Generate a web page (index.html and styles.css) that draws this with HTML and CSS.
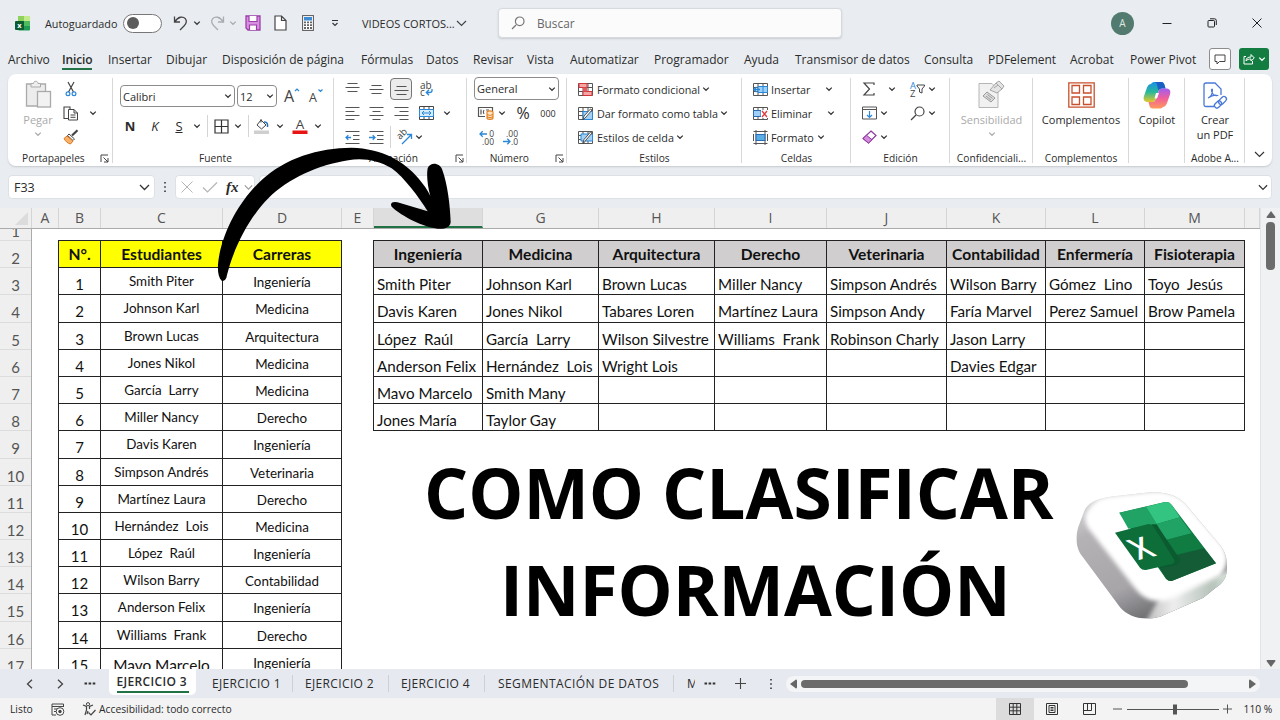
FILE: index.html
```html
<!DOCTYPE html>
<html lang="es">
<head>
  <meta charset="UTF-8">
  <meta name="viewport" content="width=device-width, initial-scale=1">
  <title>VIDEOS CORTOS</title>
  <link rel="stylesheet" href="styles.css">
</head>
<body>

<svg class="defs">
  <symbol id="chev" viewBox="0 0 8 8"><path d="M1.2 2.6 L4 5.3 L6.8 2.6" fill="none" stroke="currentColor" stroke-width="1.2"/></symbol>
  <symbol id="launch" viewBox="0 0 9 9"><path d="M1 8 V1 H8 M3.5 3.5 L8 8 M8 4 V8 H4" fill="none" stroke="#444" stroke-width="1"/></symbol>
  <symbol id="grid" viewBox="0 0 15 15"><path d="M.5 1.5 H14.5 V13.5 H.5 Z M5 1 V14 M10 1 V14 M0 5.5 H15 M0 9.5 H15" fill="#fff" stroke="#555"/></symbol>
</svg>

<div class="app">
  <div class="titlebar">
    <svg class="xl" width="15" height="15" viewBox="0 0 15 15"><rect x="3" width="6" height="8" fill="#8ed15c"/><rect x="9" width="6" height="8" fill="#c3ea8b"/><rect x="3" y="5" width="12" height="9.5" rx="1" fill="#1f9d55"/><rect x="9" y="5" width="6" height="5" fill="#4dbb5f"/><rect y="5" width="9" height="9" rx="1" fill="#0b5c31"/><text x="4.5" y="12" text-anchor="middle" font-size="7.5" font-weight="700" fill="#fff">x</text></svg>
    <span class="autosave">Autoguardado</span>
    <span class="toggle"></span>
    <svg class="undo" width="15" height="16" viewBox="0 0 15 16"><path d="M1.5 1.5 V7 H7 M1.8 6.8 C5 1.5 10 1 12.3 3.7 C14.5 6.5 13 9 11 11 L7 15" fill="none" stroke="#444" stroke-width="1.3"/></svg>
    <svg class="chev c1"><use href="#chev"/></svg>
    <svg class="redo" width="15" height="16" viewBox="0 0 15 16"><path d="M13.5 1.5 V7 H8 M13.2 6.8 C10 1.5 5 1 2.7 3.7 C.5 6.5 2 9 4 11 L8 15" fill="none" stroke="#a9adb0" stroke-width="1.3"/></svg>
    <svg class="chev c2"><use href="#chev"/></svg>
    <svg class="save" width="16" height="16" viewBox="0 0 16 16"><path d="M1 1 H15 V15 H3 L1 13 Z" fill="#d88fe0" stroke="#9b3fa8" stroke-width="1.3"/><path d="M4 1 V6.5 H12 V1 M4.5 15 V10 H11.5 V15" fill="#fff" stroke="#9b3fa8" stroke-width="1.2"/></svg>
    <svg class="doc" width="13" height="16" viewBox="0 0 13 16"><path d="M1 1 H7.5 L12 5.5 V15 H1 Z M7.5 1 V5.5 H12" fill="#fff" stroke="#444" stroke-width="1.2"/></svg>
    <svg class="calc" width="12" height="16" viewBox="0 0 12 16"><rect x=".6" y=".6" width="10.8" height="14.8" fill="#fff" stroke="#555"/><rect x="2" y="2" width="8" height="3.5" fill="#3d8bd4"/><path d="M3 6.5 V14 M6 6.5 V14 M9 6.5 V14" stroke="#555" stroke-width="1.8" stroke-dasharray="1.8 1"/></svg>
    <svg class="more" width="8" height="8" viewBox="0 0 8 8"><path d="M1 1.5 H7 M1.5 4 L4 6.5 L6.5 4" fill="none" stroke="#333" stroke-width="1.1"/></svg>
    <span class="book">VIDEOS CORTOS...</span>
    <svg class="bookchev" width="11" height="7" viewBox="0 0 11 7"><path d="M1 1 L5.5 5.5 L10 1" fill="none" stroke="#444" stroke-width="1.2"/></svg>
    <div class="search">
      <svg width="14" height="14" viewBox="0 0 14 14"><path d="M5 9 L1 13" stroke="#777" stroke-width="1.2"/><circle cx="8.7" cy="5.3" r="4.3" fill="none" stroke="#777" stroke-width="1.2"/></svg>
      <span>Buscar</span>
    </div>
    <span class="avatar">A</span>
    <svg class="wmin" width="10" height="10" viewBox="0 0 10 10"><path d="M.5 5.5 H9.5" stroke="#222"/></svg>
    <svg class="wmax" width="10" height="10" viewBox="0 0 10 10"><path d="M1 3.2 Q1 2.5 1.8 2.5 H6.7 Q7.5 2.5 7.5 3.3 V8.2 Q7.5 9 6.7 9 H1.8 Q1 9 1 8.2 Z M3 .8 H7.5 Q9.3 .8 9.3 2.5 V7" fill="none" stroke="#222"/></svg>
    <svg class="wclose" width="10" height="10" viewBox="0 0 10 10"><path d="M.5 .5 L9.5 9.5 M9.5 .5 L.5 9.5" stroke="#222"/></svg>
  </div>

  <div class="menu">
    <span>Archivo</span><span class="active">Inicio</span><span>Insertar</span><span>Dibujar</span><span>Disposición de página</span><span>Fórmulas</span><span>Datos</span><span>Revisar</span><span>Vista</span><span>Automatizar</span><span>Programador</span><span>Ayuda</span><span>Transmisor de datos</span><span>Consulta</span><span>PDFelement</span><span>Acrobat</span><span>Power Pivot</span>
    <div class="comment"><svg width="12" height="11" viewBox="0 0 12 11"><path d="M1 1 H11 V7.5 H5.5 L3 10 V7.5 H1 Z" fill="none" stroke="#444"/></svg></div>
    <div class="share"><svg width="12" height="12" viewBox="0 0 12 12"><path d="M3 3.5 H1 V11 H9.5 V8 M3 8 C3 5 5 4 8 4 V1.5 L11.3 5 L8 8 V6 C6 6 4 6.5 3 8" fill="none" stroke="#fff"/></svg><svg class="chev"><use href="#chev"/></svg></div>
  </div>

  <div class="ribbon">
    <div class="group clip">
      <div class="body">
        <div class="big paste">
          <svg width="27" height="29" viewBox="0 0 27 29"><path d="M2 4 H20 V11 H12 V26 H2 Z" fill="#ececec"/><path d="M7 4 H1.5 V26 H12 M15 4 H20.5 V11" fill="none" stroke="#aaa" stroke-width="1.3"/><path d="M6 3.5 H8.5 C8.5 .5 13 .5 13 3.5 H15.5 V7 H6 Z" fill="#eee" stroke="#aaa"/><rect x="12.5" y="11.5" width="13" height="15.5" fill="#f2f2f2" stroke="#aaa" stroke-width="1.3"/></svg>
          <span>Pegar</span>
          <svg class="chev"><use href="#chev"/></svg>
        </div>
        <svg width="12" height="16" viewBox="0 0 12 16"><path d="M3 1 L8.5 11 M9 1 L3.5 11" stroke="#444" stroke-width="1.2"/><circle cx="3" cy="12.7" r="1.9" fill="none" stroke="#2b88d8" stroke-width="1.2"/><circle cx="9" cy="12.7" r="1.9" fill="none" stroke="#2b88d8" stroke-width="1.2"/></svg><i></i>
        <svg width="16" height="16" viewBox="0 0 16 16"><path d="M5 13.5 H1 V2 H7 V4" fill="none" stroke="#444" stroke-width="1.1"/><path d="M5.5 4.5 H11 L14.5 8 V15 H5.5 Z M11 4.5 V8 H14.5 M7.5 10 H12.5 M7.5 12.3 H12.5" fill="#fff" stroke="#444"/></svg>
        <svg class="chev"><use href="#chev"/></svg>
        <svg width="16" height="16" viewBox="0 0 16 16"><path d="M14.5 1.2 L9 6.5" stroke="#444" stroke-width="2.2"/><path d="M6 5 L11.5 10 L10 11.5 L4.5 6.5 Z" fill="#fff" stroke="#444"/><path d="M4 7 L10 12 L7.5 15 C5 14.5 2.5 12.5 1 9.5 Z" fill="#f9b26b" stroke="#d9751c"/></svg><i></i>
      </div>
      <div class="label">Portapapeles<svg class="launch"><use href="#launch"/></svg></div>
    </div>

    <div class="group font">
      <div class="fields">
        <div class="field name">Calibri<svg class="chev"><use href="#chev"/></svg></div>
        <div class="field size">12<svg class="chev"><use href="#chev"/></svg></div>
        <svg class="grow" width="16" height="18" viewBox="0 0 16 18"><text x="0" y="14.5" font-size="16" fill="#444">A</text><path d="M11 4 L13 2 L15 4" fill="none" stroke="#2b88d8" stroke-width="1.2"/></svg>
        <svg class="shrink" width="16" height="18" viewBox="0 0 16 18"><text x="0" y="14.5" font-size="12.5" fill="#444">A</text><path d="M9.5 2.5 L11.5 4.5 L13.5 2.5" fill="none" stroke="#2b88d8" stroke-width="1.2"/></svg>
      </div>
      <div class="marks">
        <b>N</b><em>K</em><u>S</u><svg class="chev"><use href="#chev"/></svg><hr>
        <svg width="15" height="15" viewBox="0 0 15 15"><path d="M1 1 H14 V14 H1 Z M7.5 1 V14 M1 7.5 H14" fill="none" stroke="#333" stroke-width="1.2"/></svg>
        <svg class="chev"><use href="#chev"/></svg><hr>
        <svg width="16" height="16" viewBox="0 0 16 16"><path d="M7 2 L12 7 L7.5 11 L3 7 Z M7 4.5 V1" fill="none" stroke="#444"/><path d="M10 4 C13 3.5 14 6 13.5 9" fill="none" stroke="#2b6cb0" stroke-width="1.5"/><rect y="12.5" width="15" height="3.5" fill="#cfcfcf"/></svg>
        <svg class="chev"><use href="#chev"/></svg>
        <svg width="16" height="16" viewBox="0 0 16 16"><text x="8" y="10.5" text-anchor="middle" font-size="13.5" fill="#444">A</text><rect x=".5" y="12.5" width="15" height="3.5" fill="#e81313"/></svg>
        <svg class="chev"><use href="#chev"/></svg>
      </div>
      <div class="label">Fuente</div>
    </div>

    <div class="group align">
      <div class="body">
        <svg class="ln"><path d="M2.5 1.5 H12.5 M.5 5.5 H14.5 M2.5 9.5 H12.5"/></svg>
        <svg class="ln"><path d="M2.5 3.5 H12.5 M.5 7.5 H14.5 M2.5 11.5 H12.5"/></svg>
        <span class="pressed"><svg class="ln"><path d="M2.5 5.5 H12.5 M.5 9.5 H14.5 M2.5 13.5 H12.5"/></svg></span>
        <svg width="14" height="16" viewBox="0 0 14 16"><text x="1" y="7.5" font-size="10" fill="#444">ab</text><text x="1" y="14.5" font-size="10" fill="#444">c</text><path d="M13 8 V9.500 Q13 11.500 10.500 11.500 H7.500 M10 8.800 L7.300 11.500 L10 14.200" fill="none" stroke="#2b88d8" stroke-width="1.3"/></svg><i></i>
        <svg class="ln"><path d="M.5 1.5 H14.5 M.5 5.5 H9.5 M.5 9.5 H14.5 M.5 13.5 H9.5"/></svg>
        <svg class="ln"><path d="M.5 1.5 H14.5 M3.5 5.5 H11.5 M.5 9.5 H14.5 M3.5 13.5 H11.5"/></svg>
        <svg class="ln"><path d="M.5 1.5 H14.5 M5.5 5.5 H14.5 M.5 9.5 H14.5 M5.5 13.5 H14.5"/></svg>
        <svg width="15" height="14" viewBox="0 0 15 14"><path d="M.5 .5 H14.5 V13.5 H.5 Z M5 .5 V3.5 M10 .5 V3.5 M5 10.5 V13.5 M10 10.5 V13.5" fill="#fff" stroke="#444"/><rect x=".5" y="3.5" width="14" height="7" fill="#d6ebfb" stroke="#2b88d8"/><path d="M3 7 H12 M5 5 L3 7 L5 9 M10 5 L12 7 L10 9" fill="none" stroke="#2b88d8"/></svg>
        <svg class="chev"><use href="#chev"/></svg>
        <svg class="ln"><path d="M.5 1.5 H14.5 M8 5.5 H14.5 M8 9.5 H14.5 M.5 13.5 H14.5"/><path class="blue" d="M6 7.5 H1 M3.3 5.2 L1 7.5 L3.3 9.8"/></svg>
        <svg class="ln"><path d="M.5 1.5 H14.5 M8 5.5 H14.5 M8 9.5 H14.5 M.5 13.5 H14.5"/><path class="blue" d="M0 7.5 H6 M3.7 5.2 L6 7.5 L3.7 9.8"/></svg>
        <span class="orient"><hr><svg width="17" height="16" viewBox="0 0 17 16"><text transform="translate(4 11) rotate(-45)" font-size="9.5" fill="#444">ab</text><path d="M6 15 L15 6 M11 5.5 H15.5 V10" fill="none" stroke="#2b88d8" stroke-width="1.3"/></svg></span>
        <svg class="chev left"><use href="#chev"/></svg>
      </div>
      <div class="label">Alineación<svg class="launch"><use href="#launch"/></svg></div>
    </div>

    <div class="group number">
      <div class="field">General<svg class="chev"><use href="#chev"/></svg></div>
      <div class="nums">
        <svg width="16" height="14" viewBox="0 0 16 14"><path d="M14.5 5 V1.5 H.5 V10.5 H7 M3 3.5 V8.5 M6 4 Q4.5 6 6 8 M8 4 H11" fill="none" stroke="#555" stroke-width="1.2"/><path d="M9 6 C9 4.5 15 4.5 15 6 V12 C15 13.8 9 13.8 9 12 Z M9 8.500 Q12 10 15 8.500 M9 10.800 Q12 12.200 15 10.800" fill="#fde3c4" stroke="#e07b18" stroke-width="1.1"/></svg>
        <svg class="chev"><use href="#chev"/></svg>
        <span class="pct">%</span><span class="mil">000</span>
      </div>
      <div class="decs">
        <svg width="15" height="15" viewBox="0 0 15 15"><text x="15" y="7" text-anchor="end" font-size="8.5" fill="#444">0</text><text x="15" y="14.8" text-anchor="end" font-size="8.5" fill="#444">.00</text><path d="M8 4 H1 M3.7 1.3 L1 4 L3.7 6.7" fill="none" stroke="#2b88d8" stroke-width="1.3"/></svg>
        <svg width="15" height="15" viewBox="0 0 15 15"><text x="15" y="7" text-anchor="end" font-size="8.5" fill="#444">.00</text><text x="15" y="14.8" text-anchor="end" font-size="8.5" fill="#444">.0</text><path d="M0 11.5 H7 M4.3 8.8 L7 11.5 L4.3 14.2" fill="none" stroke="#2b88d8" stroke-width="1.3"/></svg>
      </div>
      <div class="label">Número<svg class="launch"><use href="#launch"/></svg></div>
    </div>

    <div class="group styles">
      <div class="body">
        <div class="item"><svg width="15" height="15" viewBox="0 0 15 15"><use href="#grid"/><path d="M1 1.5 H9 V5.5 H1 Z M5 9.5 H14 V13.5 H5 Z" fill="#f6a5a5" stroke="#d13438"/><path d="M5 5.5 H9 V9.5 H5 Z" fill="#e8575b"/></svg>Formato condicional<svg class="chev"><use href="#chev"/></svg></div>
        <div class="item"><svg width="15" height="15" viewBox="0 0 15 15"><use href="#grid"/><path d="M5 5.5 H14.5 V13.5 H5 Z" fill="#a3d0f5" stroke="#2b88d8"/><path d="M14 4 L8 11 L5 14 L6 10 L12.5 3 Z" fill="#fff" stroke="#444" stroke-width=".9"/></svg>Dar formato como tabla<svg class="chev"><use href="#chev"/></svg></div>
        <div class="item"><svg width="15" height="15" viewBox="0 0 15 15"><use href="#grid"/><path d="M3 4 H14.5 V11 H3 Z" fill="#a3d0f5" stroke="#2b88d8"/><path d="M14 3 L8 10 L5 14 L6 9.5 L12.5 2 Z" fill="#fff" stroke="#444" stroke-width=".9"/></svg>Estilos de celda<svg class="chev"><use href="#chev"/></svg></div>
      </div>
      <div class="label">Estilos</div>
    </div>

    <div class="group cells">
      <div class="body">
        <div class="item"><svg width="15" height="15" viewBox="0 0 15 15"><use href="#grid"/><path d="M5 4.5 H14.5 V10.5 H5 Z M10 4.5 V10.5" fill="#9fd0f7" stroke="#2b88d8"/><path d="M7 7.5 H1 M3.5 5 L1 7.5 L3.5 10" fill="none" stroke="#2b88d8" stroke-width="1.3"/></svg><span class="mid">Insertar</span><svg class="chev"><use href="#chev"/></svg></div>
        <div class="item"><svg width="15" height="15" viewBox="0 0 15 15"><use href="#grid"/><path d="M.5 4.5 H8 V10.5 H.5 Z" fill="#9fd0f7" stroke="#2b6cb0"/><rect x="8" y="4" width="7" height="8" fill="#fff"/><path d="M9 5 L14 11 M14 5 L9 11" stroke="#e03a3a" stroke-width="1.3"/></svg><span>Eliminar</span><svg class="chev"><use href="#chev"/></svg></div>
        <div class="item"><svg width="15" height="15" viewBox="0 0 15 15"><path d="M.5 1.5 H14.5 M.5 13.5 H14.5 M3 0 V15 M12 0 V15 M.5 4 V11 M14.5 4 V11" stroke="#555" fill="none"/><rect x="3" y="4.5" width="9" height="6" fill="#5aaee8" stroke="#2b6cb0"/></svg><span class="short">Formato</span><svg class="chev"><use href="#chev"/></svg></div>
      </div>
      <div class="label">Celdas</div>
    </div>

    <div class="group edit">
      <div class="body">
        <svg width="12" height="14" viewBox="0 0 12 14"><path d="M11 3 V1 H1 L6.5 7 L1 13 H11 V11" fill="none" stroke="#444" stroke-width="1.2"/></svg>
        <svg class="chev"><use href="#chev"/></svg>
        <svg width="15" height="16" viewBox="0 0 15 16"><text x="0" y="7.500" font-size="9.500" fill="#2b88d8">A</text><text x="0" y="15.500" font-size="9.500" fill="#444">Z</text><path d="M7 4 H14.500 V5 L12 8 V12 L9.500 11 V8 L7 5 Z" fill="#fff" stroke="#444"/></svg>
        <svg class="chev"><use href="#chev"/></svg>
        <svg width="15" height="14" viewBox="0 0 15 14"><path d="M.5 1 H14.5 V13 H.5 Z M.5 3.5 H14.5" fill="#fff" stroke="#555"/><path d="M7.5 5 V11.5 M5 9 L7.5 11.5 L10 9" fill="none" stroke="#2b88d8" stroke-width="1.2"/></svg>
        <svg class="chev left"><use href="#chev"/></svg>
        <svg width="15" height="15" viewBox="0 0 15 15"><circle cx="9.5" cy="5.5" r="4.5" fill="none" stroke="#444" stroke-width="1.2"/><path d="M6 9 L1 14" stroke="#444" stroke-width="1.2"/></svg>
        <svg class="chev"><use href="#chev"/></svg>
        <svg width="15" height="14" viewBox="0 0 15 14"><path d="M9 1 L14 5.5 L6.5 13 L1 8.5 Z" fill="#fff" stroke="#8e3a9d" stroke-width="1.2"/><path d="M4.5 5.3 L10 9.7 L6.5 13 L1 8.5 Z" fill="#d78be0" stroke="#8e3a9d"/></svg>
        <svg class="chev left"><use href="#chev"/></svg>
      </div>
      <div class="label">Edición</div>
    </div>

    <div class="group sens">
      <div class="big off">
        <svg width="27" height="29" viewBox="0 0 27 29"><path d="M1 3.5 H14 L20 10 V27.5 H1 Z" fill="#f1f1f1" stroke="#b5b5b5"/><path d="M5 16 L9 12 L17 18 L13 22 Z M8 16 L13 20 M9.500 14.500 L14.500 18.500" fill="#ddd" stroke="#999"/><path d="M12 10 L18 3 L24 9 L19 13 Z M18 3 L21 1 L26 6 L24 9 M16 8 L20 5" fill="#e4e4e4" stroke="#a5a5a5"/></svg>
        <span>Sensibilidad</span>
        <svg class="chev"><use href="#chev"/></svg>
      </div>
      <div class="label">Confidenciali...</div>
    </div>

    <div class="group addins">
      <div class="big">
        <svg width="27" height="29" viewBox="0 0 27 29"><path d="M.8 2.8 H26.2 V27.2 H.8 Z M4 5.5 H11.5 V13 H4 Z M15.5 5.5 H23 V13 H15.5 Z M4 17 H11.5 V24.5 H4 Z M15.5 17 H23 V24.5 H15.5 Z" fill="#fff" stroke="#c8502c" stroke-width="1.3"/></svg>
        <span>Complementos</span>
      </div>
      <div class="label">Complementos</div>
    </div>

    <div class="group copilot">
      <div class="big">
        <svg width="28" height="29" viewBox="0 0 28 29">
          <defs>
            <linearGradient id="ca" x1="0" y1="0" x2="0" y2="1"><stop offset="0" stop-color="#1a8fe8"/><stop offset=".5" stop-color="#28b89a"/><stop offset="1" stop-color="#e6c928"/></linearGradient>
            <linearGradient id="cb" x1="0" y1="0" x2="0" y2="1"><stop offset="0" stop-color="#a35df0"/><stop offset=".5" stop-color="#f0609a"/><stop offset="1" stop-color="#ff9a5a"/></linearGradient>
          </defs>
          <path d="M8 4 C9 2.5 10 2 12 2 H18 C20.5 2 21 3.5 21.5 5 L22.5 8.5 H19 C17 8.5 16 10 15.5 11.5 L13 19 C12 21.5 11 22 9 22 H5 C1 22 0 19.5 1 16 L4 7.5 C5 5 6.5 4 8 4 Z" fill="url(#ca)"/>
          <path d="M12 2 H18 C20.5 2 21 3.5 21.5 5 L22.5 8.5 H19 C17 8.5 16 9.5 15.5 10.5 C14 6 14.5 3 12 2 Z" fill="#1b5fc4"/>
          <path d="M20 27 C19 28 18 28.5 16 28.5 H10 C7.5 28.5 7 27.5 6.5 26 L5.5 22 H9 C11 22 12 21.5 13 19 L15.5 11.5 C16 10 17 8.5 19 8.5 H23 C27 8.5 28 11 27 14.5 L24 23 C23 25.500 21.500 27 20 27 Z" fill="url(#cb)"/>
          <path d="M13 13 H16 L14 18.5 H11.5 Z" fill="#fff"/>
        </svg>
        <span>Copilot</span>
      </div>
    </div>

    <div class="group pdf">
      <div class="big">
        <svg width="25" height="29" viewBox="0 0 25 29"><path d="M11 26.5 H3 Q1 26.5 1 24.5 V5 Q1 3 3 3 H12 L18 9 V15" fill="none" stroke="#4a78d8" stroke-width="1.3"/><path d="M5 18 C8 16.5 9.5 13 9.5 10 C9.5 8.5 8 9 8.5 11 C9.5 14.5 12 16.5 14.5 15.5 C12 14.5 8 16 5 18" fill="none" stroke="#4a78d8" stroke-width="1.1"/><g fill="none" stroke="#4a78d8" stroke-width="1.3"><rect x="15" y="18" width="9" height="5" rx="2.5" transform="rotate(-45 19.5 20.5)"/><rect x="11" y="22" width="8" height="5" rx="2.5" transform="rotate(-45 15 24.5)"/></g></svg>
        <span>Crear<br>un PDF</span>
      </div>
      <div class="label">Adobe A...</div>
    </div>

    <div class="collapse"><svg width="11" height="7" viewBox="0 0 11 7"><path d="M1 1 L5.5 5.5 L10 1" fill="none" stroke="#333" stroke-width="1.2"/></svg></div>
  </div>

  <div class="formula">
    <div class="box ref">F33<svg width="11" height="7" viewBox="0 0 11 7"><path d="M1 1 L5.5 5.5 L10 1" fill="none" stroke="#333" stroke-width="1.3"/></svg></div>
    <svg class="dots" width="4" height="12" viewBox="0 0 4 12"><path d="M2 1 V12" stroke="#333" stroke-width="1.6" stroke-dasharray="1.6 2.6"/></svg>
    <div class="box fx">
      <svg width="12" height="12" viewBox="0 0 12 12"><path d="M.5 .5 L11.5 11.5 M11.5 .5 L.5 11.5" stroke="#b5b5b5"/></svg>
      <svg width="16" height="12" viewBox="0 0 16 12"><path d="M1 6.5 L5.5 11 L15 1.5" fill="none" stroke="#b5b5b5" stroke-width="1.2"/></svg>
      <span>fx</span>
      <svg width="9" height="7" viewBox="0 0 11 7"><path d="M1 1 L5.5 5.5 L10 1" fill="none" stroke="#999" stroke-width="1.3"/></svg>
    </div>
    <div class="box input"><svg width="10" height="7" viewBox="0 0 11 7"><path d="M1 1 L5.5 5.5 L10 1" fill="none" stroke="#333" stroke-width="1.3"/></svg></div>
  </div>

  <div class="sheet">
    <div class="grid">
      <div class="cols">
        <span class="corner"><svg width="13" height="13" viewBox="0 0 13 13"><path d="M13 0 V13 H0 Z" fill="#dcdcdc"/></svg></span><span>A</span><span>B</span><span>C</span><span>D</span><span>E</span><span class="sel"></span><span>G</span><span>H</span><span>I</span><span>J</span><span>K</span><span>L</span><span>M</span><span></span>
      </div>
      <div class="rows">
        <div class="nums-col" id="rowNums"></div>
        <div class="students" id="students"><b>N°.</b><b>Estudiantes</b><b>Carreras</b></div>
        <div class="careers" id="careers"></div>
      </div>
    </div>
    <div class="vscroll">
      <svg width="10" height="7" viewBox="0 0 10 7"><path d="M5 0 L9.5 6 Q9.5 7 8.5 7 H1.5 Q.5 7 .5 6 Z" fill="#666"/></svg>
      <div class="thumb"></div>
      <svg class="down" width="10" height="7" viewBox="0 0 10 7"><path d="M5 7 L9.5 1 Q9.5 0 8.5 0 H1.5 Q.5 0 .5 1 Z" fill="#666"/></svg>
    </div>
  </div>

  <div class="sheets">
    <svg class="prev" width="7" height="10" viewBox="0 0 7 10"><path d="M6 .8 L1.5 5 L6 9.2" fill="none" stroke="#444" stroke-width="1.3"/></svg>
    <svg class="next" width="7" height="10" viewBox="0 0 7 10"><path d="M1 .8 L5.5 5 L1 9.2" fill="none" stroke="#444" stroke-width="1.3"/></svg>
    <svg class="dd" width="12" height="3" viewBox="0 0 12 3"><path d="M.5 1.5 H12" stroke="#333" stroke-width="2" stroke-dasharray="2.6 1.5"/></svg>
    <span class="tab active">EJERCICIO 3</span>
    <span class="tab">EJERCICIO 1</span>
    <span class="tab">EJERCICIO 2</span>
    <span class="tab">EJERCICIO 4</span>
    <span class="tab long">SEGMENTACIÓN DE DATOS</span>
    <span class="tab cut">M</span>
    <svg class="dd2" width="12" height="3" viewBox="0 0 12 3"><path d="M.5 1.5 H12" stroke="#333" stroke-width="2" stroke-dasharray="2.6 1.5"/></svg>
    <svg class="plus" width="11" height="11" viewBox="0 0 11 11"><path d="M5.5 0 V11 M0 5.5 H11" stroke="#444" stroke-width="1.1"/></svg>
    <svg class="dots" width="4" height="12" viewBox="0 0 4 12"><path d="M2 1 V12" stroke="#333" stroke-width="1.6" stroke-dasharray="1.6 2.6"/></svg>
    <div class="hscroll">
      <svg width="7" height="10" viewBox="0 0 7 10"><path d="M0 5 L6 .5 Q7 .5 7 1.5 V8.5 Q7 9.5 6 9.5 Z" fill="#666"/></svg>
      <div class="thumb"></div>
      <svg class="end" width="7" height="10" viewBox="0 0 7 10"><path d="M7 5 L1 .5 Q0 .5 0 1.5 V8.5 Q0 9.5 1 9.5 Z" fill="#666"/></svg>
    </div>
  </div>

  <div class="status">
    <span class="ready">Listo</span>
    <svg class="macro" width="14" height="13" viewBox="0 0 14 13"><path d="M5 12 H1 V1 H12.5 V4 M1 3.5 H12.5 M3 6 H6 M3 8.5 H5" fill="none" stroke="#444"/><circle cx="9" cy="8.5" r="3.8" fill="#fff" stroke="#444"/><circle cx="9" cy="8.5" r="1.7" fill="#444"/></svg>
    <svg class="acc" width="14" height="14" viewBox="0 0 14 14"><circle cx="6" cy="2.2" r="1.6" fill="none" stroke="#444"/><path d="M1 3 L4.5 4.5 V8 L3 13 M11 3 L7.5 4.5 V7 M6 9 L5 12" fill="none" stroke="#444" stroke-width="1.2"/><path d="M6.5 10.5 L9 13 L13.5 8" fill="none" stroke="#444" stroke-width="1.2"/></svg>
    <span class="acctext">Accesibilidad: todo correcto</span>
    <span class="view on"><svg width="12" height="12" viewBox="0 0 12 12"><path d="M.5 .5 H11.5 V11.5 H.5 Z M4.2 .5 V11.5 M7.8 .5 V11.5 M.5 4.2 H11.5 M.5 7.8 H11.5" fill="none" stroke="#333"/></svg></span>
    <span class="view"><svg width="12" height="12" viewBox="0 0 12 12"><path d="M.5 .5 H11.5 V11.5 H.5 Z M3 2.5 H9 V9.5 H3 Z M4.5 4.5 H7.5 M4.5 6 H7.5 M4.5 7.5 H7.5" fill="none" stroke="#333"/></svg></span>
    <span class="view"><svg width="13" height="12" viewBox="0 0 13 12"><path d="M.5 .5 H12.5 V11.5 H.5 Z M.5 7.5 H8.5 V.5 M4.5 .5 V7.5" fill="none" stroke="#333"/></svg></span>
    <svg class="zoom" width="119" height="12" viewBox="0 0 119 12"><path d="M0 6 H9 M110 6 H119 M114.5 1.5 V10.5 M14 6.5 H106" stroke="#555"/><rect x="60" y="1.5" width="4" height="10" fill="#555"/></svg>
    <span class="pctext">110 %</span>
  </div>

  <div class="headline"><span>COMO CLASIFICAR</span><span class="second">INFORMACIÓN</span></div>

  <svg class="arrow" viewBox="0 0 780 465">
    <path d="M50 437 C38 425 36 400 42 365 C60 270 115 185 170 135 C240 70 340 38 440 38 C530 40 600 80 640 130 C655 148 668 165 676 183 C668 155 664 120 668 100 C675 80 705 82 712 105 C728 150 735 210 737 262 C735 280 715 283 698 281 C640 272 580 235 560 215 C552 200 570 198 585 204 L668 229 C640 185 600 130 560 100 C520 75 470 68 430 76 C340 90 250 130 190 190 C140 240 90 325 66 420 C64 435 56 440 50 437 Z"/>
  </svg>

  <svg class="logo" viewBox="0 0 540 450">
    <defs>
      <linearGradient id="side" x1="0" y1="0" x2=".55" y2="1"><stop offset="0" stop-color="#f2f2f2"/><stop offset=".35" stop-color="#b5b2b6"/><stop offset=".7" stop-color="#a8a5a9"/><stop offset="1" stop-color="#55585a"/></linearGradient>
      <linearGradient id="front" x1="0" y1="0" x2="1" y2="0"><stop offset="0" stop-color="#b9b9b9"/><stop offset=".35" stop-color="#eeeeee"/><stop offset=".8" stop-color="#b5c2b9"/><stop offset="1" stop-color="#dfe9e2"/></linearGradient>
      <filter id="soft" x="-10%" y="-10%" width="120%" height="120%"><feGaussianBlur stdDeviation="7"/></filter>
      <clipPath id="block"><path d="M75 88 C90 62 120 55 150 50 L270 37 C325 34 355 50 375 70 L480 195 C500 220 503 245 500 275 C498 300 480 315 465 325 L430 353 L300 410 C245 424 205 410 180 382 L60 220 C45 190 48 165 55 140 Z"/></clipPath>
    </defs>
    <g clip-path="url(#block)">
      <rect width="540" height="450" fill="url(#side)"/>
      <path d="M255 430 L300 350 L510 270 V450 H250 Z" fill="url(#front)" filter="url(#soft)"/>
      <path d="M88 85 C105 58 130 50 160 47 L280 34 C330 32 360 48 380 68 L488 195 C508 225 505 260 480 288 L330 358 C275 375 245 350 225 325 L85 145 C70 120 75 100 88 85 Z" fill="#fff" filter="url(#soft)"/>
    </g>
    <path d="M178 98 L315 66 Q328 64 336 76 L468 250 L335 303 Q325 304 318 296 Z" fill="#0e7a43"/>
    <path d="M178 98 L258 80 L290 132 L205 146 Z" fill="#22a366"/>
    <path d="M258 80 L315 66 Q328 64 336 76 L360 112 L290 132 Z" fill="#33c481"/>
    <path d="M290 132 L360 112 L395 160 L318 180 Z" fill="#21a366"/>
    <path d="M318 180 L395 160 L432 205 L352 222 Z" fill="#107c41"/>
    <path d="M290 250 L352 224 L432 205 L468 250 L335 303 Q325 304 318 296 Z" fill="#135c35"/>
    <path d="M275 133 L290 134 L360 238 Q362 250 350 254 L300 265 Z" fill="#0b5a30"/>
    <path d="M165 158 L265 132 Q275 131 281 140 L343 240 Q345 248 337 252 L258 270 Q246 271 240 263 Z" fill="#0d6e3a"/>
    <text class="logo-x" transform="translate(236 240) rotate(-14) skewX(22)" font-size="92" fill="#fff">X</text>
  </svg>
</div>

<script>
  const students = [
    ["Smith Piter", "Ingeniería"], ["Johnson Karl", "Medicina"], ["Brown Lucas", "Arquitectura"],
    ["Jones Nikol", "Medicina"], ["García  Larry", "Medicina"], ["Miller Nancy", "Derecho"],
    ["Davis Karen", "Ingeniería"], ["Simpson Andrés", "Veterinaria"], ["Martínez Laura", "Derecho"],
    ["Hernández  Lois", "Medicina"], ["López  Raúl", "Ingeniería"], ["Wilson Barry", "Contabilidad"],
    ["Anderson Felix", "Ingeniería"], ["Williams  Frank", "Derecho"], ["Mavo Marcelo", "Ingeniería"]
  ];

  const careers = [
    ["Ingeniería", "Medicina", "Arquitectura", "Derecho", "Veterinaria", "Contabilidad", "Enfermería", "Fisioterapia"],
    ["Smith Piter", "Johnson Karl", "Brown Lucas", "Miller Nancy", "Simpson Andrés", "Wilson Barry", "Gómez  Lino", "Toyo  Jesús"],
    ["Davis Karen", "Jones Nikol", "Tabares Loren", "Martínez Laura", "Simpson Andy", "Faría Marvel", "Perez Samuel", "Brow Pamela"],
    ["López  Raúl", "García  Larry", "Wilson Silvestre", "Williams  Frank", "Robinson Charly", "Jason Larry", "", ""],
    ["Anderson Felix", "Hernández  Lois", "Wright Lois", "", "", "Davies Edgar", "", ""],
    ["Mavo Marcelo", "Smith Many", "", "", "", "", "", ""],
    ["Jones María", "Taylor Gay", "", "", "", "", "", ""]
  ];

  let html = "";
  for (let i = 1; i <= 17; i++) html += `<span>${i}</span>`;
  document.getElementById("rowNums").innerHTML = html;

  students.forEach((s, i) => {
    document.getElementById("students").innerHTML +=
      `<span class="n">${i + 1}</span><span class="who">${s[0]}</span><span>${s[1]}</span>`;
  });

  careers.forEach((row, i) => {
    row.forEach(cell => {
      document.getElementById("careers").innerHTML += i === 0 ? `<b>${cell}</b>` : `<span>${cell}</span>`;
    });
  });
</script>

</body>
</html>
```

FILE: styles.css
```css
* {
  box-sizing: border-box;
}
body {
  margin: 0;
  font-family: "Open Sans", "Noto Sans", sans-serif;
  font-size: 11px;
  color: #2b2b2b;
}
svg {
  display: block;
  flex: none;
  overflow: visible;
}
.defs {
  position: absolute;
  width: 0;
  height: 0;
}
.app {
  position: relative;
  width: 1280px;
  height: 720px;
  overflow: hidden;
  background: #e9edf1;
  display: flex;
  flex-direction: column;
}
.chev {
  width: 8px;
  height: 8px;
  color: #333;
}
hr {
  width: 1px;
  height: 22px;
  margin: 0;
  border: 0;
  background: #d5d5d5;
}

/* title bar */
.titlebar {
  display: flex;
  align-items: center;
  height: 46px;
  padding-left: 15px;
  white-space: nowrap;
}
.autosave { margin-left: 15px; width: 78px; font-size: 10.8px; }
.toggle {
  width: 39px;
  height: 19px;
  border: 1px solid #777;
  border-radius: 10px;
  background: #fff;
  padding: 2px;
}
.toggle::before {
  content: "";
  display: block;
  width: 12px;
  height: 12px;
  margin: 0.5px 1px;
  border-radius: 50%;
  background: #5c5c5c;
}
.undo { margin-left: 11px; }
.c1 { margin-left: 5px; }
.redo { margin-left: 9px; }
.c2 { margin-left: 4px; color: #aaa; }
.save { margin-left: 8px; }
.doc { margin-left: 13px; }
.calc { margin-left: 15px; }
.more { margin-left: 17px; }
.book { margin-left: 23px; width: 94px; font-size: 11px; }
.search {
  display: flex;
  align-items: center;
  gap: 12px;
  width: 344px;
  height: 30px;
  margin-left: 31px;
  padding-left: 12px;
  background: #fbfbfb;
  border: 1px solid #d6dade;
  border-radius: 4px;
  box-shadow: 0 1px 2px #c8ccd0;
  font-size: 11.8px;
  color: #666;
}
.avatar {
  width: 23px;
  height: 23px;
  margin-left: 269px;
  border-radius: 50%;
  background: #527a6e;
  color: #dfe9e5;
  font-size: 10px;
  line-height: 23px;
  text-align: center;
}
.wmin { margin-left: 28px; }
.wmax { margin-left: 35px; }
.wclose { margin-left: 35px; }

/* ribbon tabs */
.menu {
  display: grid;
  grid-template-columns: 54px 46px 58px 56px 139px 65px 47px 54px 43px 84px 90px 51px 129px 64px 82px 60px 79px 30px 30px;
  height: 28px;
  padding-left: 8px;
  font-size: 12px;
  line-height: 28px;
  white-space: nowrap;
}
.menu .active {
  font-weight: 600;
  letter-spacing: -0.15px;
  justify-self: start;
  height: 24px;
  border-bottom: 2px solid #217346;
}
.comment {
  display: flex;
  align-items: center;
  justify-content: center;
  width: 22px;
  height: 22px;
  margin-top: 2px;
  background: #fff;
  border: 1px solid #8c8c8c;
  border-radius: 3px;
}
.share {
  display: flex;
  align-items: center;
  justify-content: center;
  gap: 3px;
  width: 30px;
  height: 22px;
  margin-top: 2px;
  background: #137c41;
  border-radius: 3px;
}
.share .chev { color: #fff; }

/* ribbon */
.ribbon {
  display: grid;
  grid-template-columns: 105px 221px 133px 100px 175px 109px 99px 83px 96px 56px 60px 28px;
  width: 1264px;
  height: 92px;
  margin-left: 8px;
  padding-top: 3px;
  background: #fff;
  border-radius: 8px;
  box-shadow: 0 1px 2px #c5c8cc;
}
.group {
  display: flex;
  flex-direction: column;
  position: relative;
  height: 90px;
}
.group::after {
  content: "";
  position: absolute;
  right: 0;
  top: 1px;
  width: 1px;
  height: 85px;
  background: #d8d8d8;
}
.label {
  display: flex;
  justify-content: center;
  align-items: center;
  height: 18px;
  margin-top: auto;
  font-size: 10.2px;
  font-weight: 500;
  white-space: nowrap;
}
.launch {
  width: 9px;
  height: 9px;
}
.body {
  display: grid;
  grid-template-rows: 24px 24px 24px;
  align-items: center;
  justify-items: center;
}
.big {
  display: flex;
  flex-direction: column;
  align-items: center;
  padding-top: 3px;
  font-size: 11px;
  line-height: 15px;
  text-align: center;
  white-space: nowrap;
}
.big span { margin-top: 3px; }
.big .chev { margin-top: 3px; }
.clip .body { grid-template-columns: 52px 14px 30px; padding-left: 4px; }
.paste { grid-row: 1 / 4; align-self: start; }
.paste, .off, .paste .chev, .off .chev { color: #aaa; }
.clip .label { justify-content: flex-start; padding-left: 14px; }
.clip .launch { margin-left: auto; margin-right: 4px; }

.field {
  display: flex;
  align-items: center;
  justify-content: space-between;
  height: 22px;
  padding: 0 2px;
  border: 1px solid #8c8c8c;
  border-radius: 4px;
}
.fields {
  display: flex;
  align-items: center;
  margin-top: 8px;
  padding-left: 7px;
}
.name { width: 115px; }
.size { width: 40px; margin-left: 2px; }
.grow { margin-left: 7px; }
.shrink { margin-left: 9px; }
.marks {
  display: grid;
  grid-template-columns: 24px 26px 22px 14px 6px 22px 12px 8px 20px 16px 24px 12px;
  align-items: center;
  justify-items: center;
  height: 24px;
  margin-top: 7px;
  padding-left: 5px;
  font-size: 13px;
}
.font .label { padding-right: 16px; }

.ln {
  width: 15px;
  height: 15px;
  fill: none;
  stroke: #555;
}
.ln .blue { stroke: #2b88d8; stroke-width: 1.3; }
.align .body { grid-template-columns: 24px 24px 26px 24px 18px; padding-left: 6px; justify-content: start; }
.pressed {
  width: 22px;
  height: 22px;
  padding: 2px 2.5px;
  background: #ececec;
  border: 1px solid #777;
  border-radius: 4px;
}
.orient { display: flex; align-items: center; gap: 5px; }
.chev.left { justify-self: start; margin-left: 1px; }
.align .label, .number .label { justify-content: flex-end; padding-right: 3px; }
.align .launch { margin-left: 37px; }
.number .launch { margin-left: 26px; }
.number .field { width: 85px; height: 23px; margin: 0 0 1px 7px; }
.nums, .decs {
  display: grid;
  grid-template-columns: 24px 8px 34px 16px;
  align-items: center;
  justify-items: center;
  height: 24px;
  padding-left: 7px;
}
.decs { grid-template-columns: 24px 24px; }
.pct { font-size: 16px; line-height: 24px; }
.mil { font-size: 9px; }

.styles .body, .cells .body {
  justify-items: start;
  padding-left: 11px;
}
.item {
  display: flex;
  align-items: center;
  gap: 4px;
  height: 22px;
  font-size: 10.8px;
  white-space: nowrap;
}
.item .chev { margin-left: -2px; }
.cells .item { gap: 3px; }
.cells .item span { width: 55px; }
.cells .item .mid { width: 53px; }
.cells .item .short { width: 45px; }

.edit .body { grid-template-columns: 20px 26px 24px 6px; padding-left: 8px; justify-content: start; }
.collapse { align-self: end; padding: 0 0 9px 9px; }

/* formula bar */
.formula {
  display: flex;
  height: 42px;
  padding: 9px 8px 0;
}
.box {
  display: flex;
  align-items: center;
  height: 24px;
  background: #fff;
  border: 1px solid #dde1e5;
  border-radius: 4px;
}
.ref {
  justify-content: space-between;
  width: 147px;
  padding: 0 4px 0 5px;
  font-size: 12.5px;
}
.dots { margin: 6px 8px; }
.fx {
  width: 80px;
  padding-left: 5px;
}
.fx svg + svg { margin-left: 9px; }
.fx span {
  margin-left: 8px;
  font: italic 700 15px "Liberation Serif", serif;
}
.fx span + svg { margin-left: 5px; }
.input {
  flex: 1;
  justify-content: flex-end;
  margin-left: 4px;
  padding-right: 3px;
}

/* sheet */
.sheet {
  display: flex;
  height: 461px;
  background: #fff;
}
.grid {
  width: 1260px;
  overflow: hidden;
}
.cols {
  display: grid;
  grid-template-columns: 32px 27px 42px 122px 119px 32px 109px 116px 116px 112px 120px 99px 99px 100px 15px;
  height: 21px;
  background: #efefef;
  border-bottom: 1px solid #ababab;
  font-size: 14px;
  line-height: 20px;
  color: #555;
  text-align: center;
}
.cols span { border-right: 1px solid #d5d5d5; }
.cols .corner { display: flex; justify-content: flex-end; align-items: center; padding-right: 3px; }
.cols .sel { background: #dedede; border-bottom: 2px solid #217346; }
.rows {
  display: flex;
  align-items: flex-start;
  font-family: Lato, "Open Sans", sans-serif;
  font-variant-ligatures: none;
  color: #111;
  white-space: pre;
}
.nums-col {
  display: grid;
  grid-template-rows: 12px;
  grid-auto-rows: 27.2px;
  width: 32px;
  background: #efefef;
  border-right: 1px solid #ababab;
  font-size: 15px;
  color: #555;
  text-align: center;
}
.nums-col span {
  overflow: hidden;
  line-height: 34px;
  border-bottom: 1px solid #dcdcdc;
}
.nums-col span:first-child { line-height: 5px; }
.students, .careers {
  display: grid;
  grid-auto-rows: 27.2px;
  margin-top: 11px;
  border-top: 1px solid #222;
  border-left: 1px solid #222;
}
.students {
  grid-template-columns: 42px 122px 119px;
  margin-left: 26px;
  font-size: 13.4px;
  text-align: center;
}
.students > *, .careers > * {
  border-right: 1px solid #222;
  border-bottom: 1px solid #222;
  line-height: 29px;
  overflow: hidden;
}
.students b, .careers b {
  font-size: 15.6px;
  line-height: 27px;
}
.students b { background: #ff0; }
.students .n { font-size: 15px; line-height: 33px; }
.students .who { line-height: 27px; }
.students .who:nth-last-child(2) { font-size: 15.4px; line-height: 33px; }
.careers {
  grid-template-columns: 109px 116px 116px 112px 120px 99px 99px 100px;
  margin-left: 31px;
  font-size: 15.2px;
}
.careers span { padding-left: 3px; line-height: 33px; }
.careers b {
  background: #d0cece;
  text-align: center;
}
.vscroll {
  display: flex;
  flex-direction: column;
  align-items: center;
  width: 20px;
  padding: 3px 0 2px;
  background: #f0f1f3;
  border-left: 1px solid #e2e4e7;
}
.vscroll .thumb {
  width: 9px;
  height: 48px;
  margin-top: 4px;
  border-radius: 4px;
  background: #6b6b6b;
}
.vscroll .down { margin-top: auto; }

/* sheet tabs */
.sheets {
  display: flex;
  align-items: center;
  height: 29px;
  padding-left: 26px;
  background: #e6e9ef;
  white-space: nowrap;
  font-size: 12px;
  letter-spacing: 0.35px;
}
.next { margin-left: 24px; }
.dd { margin: 0 13px 0 20px; }
.tab {
  width: 96px;
  padding-left: 12px;
  border-right: 1px solid #cdd1d6;
}
.tab.active {
  align-self: flex-start;
  width: 87px;
  height: 26px;
  margin-right: 4px;
  padding: 4px 7.5px 0;
  border: 0;
  border-radius: 0 0 5px 5px;
  background: #fff;
  font-weight: 600;
  line-height: 17px;
}
.tab.active::after {
  content: "";
  display: block;
  height: 2px;
  margin-top: 1px;
  background: #217346;
}
.tab.active + .tab { width: 93px; }
.tab.long { width: 189px; padding-left: 13px; letter-spacing: 0.42px; }
.tab.cut { width: 21px; height: 16px; line-height: 16px; padding-left: 13px; border: 0; overflow: hidden; }
.dd2 { margin-left: 9px; }
.plus { margin-left: 19px; }
.sheets .dots { margin: 0 0 0 23px; }
.hscroll {
  display: flex;
  align-items: center;
  width: 474px;
  height: 16px;
  margin-left: 13px;
  padding: 0 4px;
  border-radius: 8px;
  background: #f4f5f6;
}
.hscroll .thumb {
  width: 387px;
  height: 8px;
  margin-left: 4px;
  border-radius: 4px;
  background: #6b6b6b;
}
.hscroll .end { margin-left: auto; }

/* status bar */
.status {
  display: flex;
  align-items: center;
  height: 22px;
  padding-left: 10px;
  background: #f3f3f3;
  font-size: 10.3px;
  white-space: nowrap;
}
.ready { width: 41px; }
.acc { margin: 0 3px 0 17px; }
.acctext { width: 897px; }
.view {
  display: flex;
  align-items: center;
  justify-content: center;
  width: 37.5px;
  height: 22px;
}
.view.on { background: #dcdcdc; }
.zoom { margin-left: 4px; }
.pctext { margin-left: 12px; }

/* overlay art */
.headline {
  position: absolute;
  left: 424px;
  top: 444px;
  font: 700 69.4px/97px "Open Sans", sans-serif;
  color: #000;
  white-space: nowrap;
}
.headline span { display: block; }
.headline .second { padding-left: 76px; }
.arrow {
  position: absolute;
  left: 205px;
  top: 135px;
  width: 260px;
  height: 155px;
}
.logo {
  position: absolute;
  left: 1060px;
  top: 480px;
  width: 180px;
  height: 150px;
}
.logo-x { font-weight: 600; }
```
